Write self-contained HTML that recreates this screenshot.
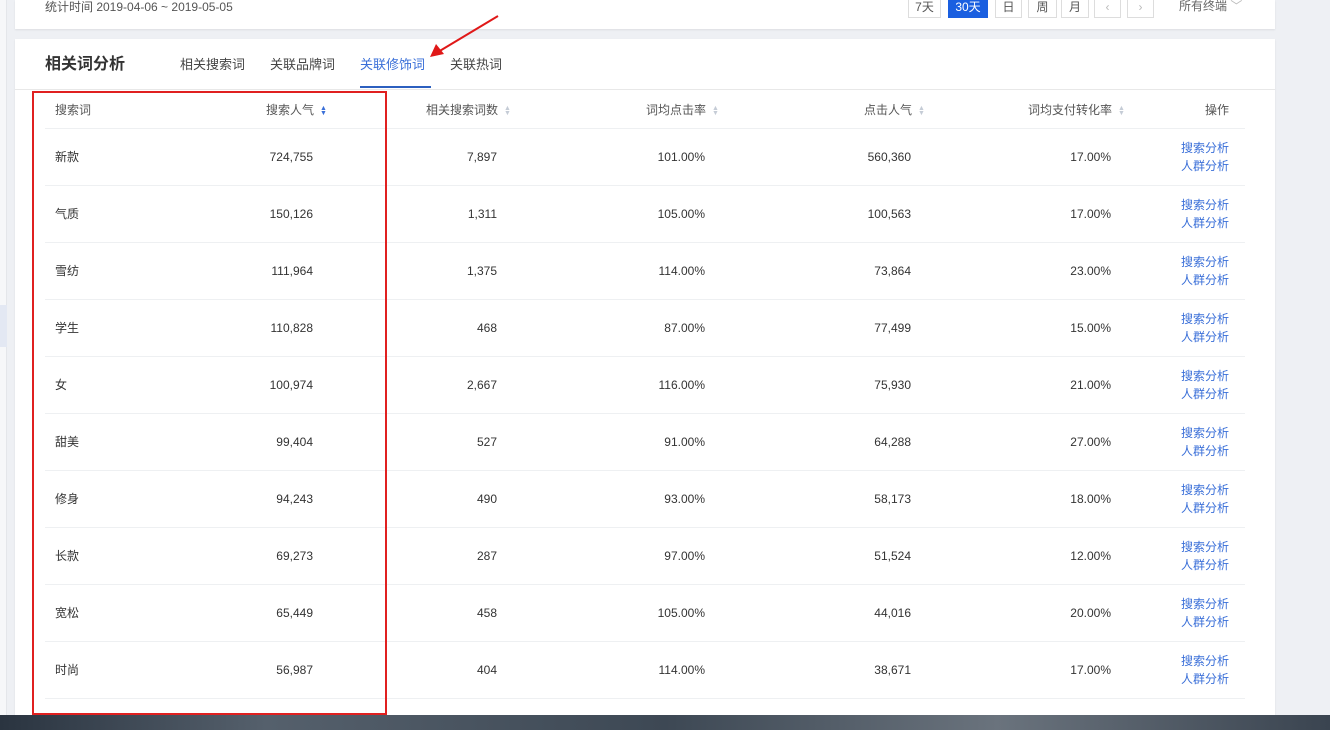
<!DOCTYPE html>
<html><head><meta charset="utf-8"><style>
*{margin:0;padding:0;box-sizing:border-box}
body{width:1330px;height:730px;overflow:hidden;background:#eef0f4;font-family:"Liberation Sans","Noto Sans CJK SC",sans-serif;font-size:12px;color:#333;position:relative}
.lstrip{position:absolute;left:0;top:0;width:7px;height:715px;background:#f6f7f9;border-right:1px solid #e4e6ea}
.lstrip i{position:absolute;left:0;top:305px;width:7px;height:42px;background:#e3e8f3}
.top{position:absolute;left:15px;top:0;width:1260px;height:29px;background:#fff;box-shadow:0 1px 2px rgba(0,0,0,.08)}
.top .t{position:absolute;left:30px;top:-2px;font-size:12px;color:#555}
.btn{position:absolute;top:-4px;height:22px;border:1px solid #ddd;font-size:12px;color:#555;text-align:center;line-height:20px;background:#fff}
.main{position:absolute;left:15px;top:39px;width:1260px;height:690px;background:#fff;box-shadow:0 1px 2px rgba(0,0,0,.08)}
.title{position:absolute;left:30px;top:14px;font-size:16px;font-weight:bold;color:#333;line-height:24px}
.tab{position:absolute;top:16px;font-size:13px;color:#444;line-height:20px}
.tab.a{color:#3a6fd8}
.uline{position:absolute;left:345px;top:47px;width:71px;height:2px;background:#2c5fbf}
.hr{position:absolute;left:0;top:50px;width:1260px;height:1px;background:#e8e8e8}
.row{position:absolute;left:30px;width:1200px;border-bottom:1px solid #eef0f2}
.c{position:absolute;font-size:12px;color:#333;white-space:nowrap;line-height:14px}
.r{text-align:right}
.hd .c{color:#555}
.s{display:inline-block;width:6px;margin-left:6px;vertical-align:middle;line-height:5px;font-size:7px;color:#c5ccd6}
.lk{color:#3a6fd8;line-height:18px}
.red{position:absolute;left:32px;top:91px;width:355px;height:624px;border:2px solid #e02020}
.task{position:absolute;left:0;top:715px;width:1330px;height:15px;background:linear-gradient(90deg,#2a3440,#55606c 20%,#3d4854 50%,#6a737d 75%,#3a4450)}
</style></head><body>
<div class="lstrip"><i></i></div>
<div class="top"><div class="t">统计时间 2019-04-06 ~ 2019-05-05</div>
<div class="btn" style="left:893px;width:33px">7天</div>
<div class="btn" style="left:933px;width:40px;background:#1a5fe0;color:#fff;border-color:#1a5fe0">30天</div>
<div class="btn" style="left:980px;width:27px">日</div>
<div class="btn" style="left:1013px;width:29px">周</div>
<div class="btn" style="left:1046px;width:28px">月</div>
<div class="btn" style="left:1079px;width:27px;color:#bbb">‹</div>
<div class="btn" style="left:1112px;width:27px;color:#bbb">›</div>
<div style="position:absolute;left:1164px;top:-3px;color:#666">所有终端 <span style="color:#bbb">﹀</span></div>
</div>
<div class="main">
<div class="title">相关词分析</div>
<div class="tab" style="left:165px">相关搜索词</div>
<div class="tab" style="left:255px">关联品牌词</div>
<div class="tab a" style="left:345px">关联修饰词</div>
<div class="tab" style="left:435px">关联热词</div>
<div class="uline"></div><div class="hr"></div>
<div class="row hd" style="top:51px;height:39px">
<div class="c" style="left:10px;top:13px">搜索词</div>
<div class="c r" style="right:919px;top:13px">搜索人气<span class="s" style="color:#3a6fd8">▲<br>▼</span></div>
<div class="c r" style="right:735px;top:13px">相关搜索词数<span class="s">▲<br>▼</span></div>
<div class="c r" style="right:527px;top:13px">词均点击率<span class="s">▲<br>▼</span></div>
<div class="c r" style="right:321px;top:13px">点击人气<span class="s">▲<br>▼</span></div>
<div class="c r" style="right:121px;top:13px">词均支付转化率<span class="s">▲<br>▼</span></div>
<div class="c r" style="right:16px;top:13px">操作</div>
</div>
</div>
<div id="rows"></div>
<div class="red"></div>
<div class="task"></div>
<script>
var d=[["新款","724,755","7,897","101.00%","560,360","17.00%"],["气质","150,126","1,311","105.00%","100,563","17.00%"],["雪纺","111,964","1,375","114.00%","73,864","23.00%"],["学生","110,828","468","87.00%","77,499","15.00%"],["女","100,974","2,667","116.00%","75,930","21.00%"],["甜美","99,404","527","91.00%","64,288","27.00%"],["修身","94,243","490","93.00%","58,173","18.00%"],["长款","69,273","287","97.00%","51,524","12.00%"],["宽松","65,449","458","105.00%","44,016","20.00%"],["时尚","56,987","404","114.00%","38,671","17.00%"]];
var h="";d.forEach(function(r,i){var t=129+i*57;
h+='<div class="row" style="left:45px;top:'+t+'px;height:57px">'+
'<div class="c" style="left:10px;top:21px">'+r[0]+'</div>'+
'<div class="c r" style="right:932px;top:21px">'+r[1]+'</div>'+
'<div class="c r" style="right:748px;top:21px">'+r[2]+'</div>'+
'<div class="c r" style="right:540px;top:21px">'+r[3]+'</div>'+
'<div class="c r" style="right:334px;top:21px">'+r[4]+'</div>'+
'<div class="c r" style="right:134px;top:21px">'+r[5]+'</div>'+
'<div class="c r lk" style="right:16px;top:10px">搜索分析<br>人群分析</div></div>';});
document.getElementById("rows").innerHTML=h;
</script>
<svg style="position:absolute;left:428px;top:14px" width="72" height="44"><line x1="70" y1="2" x2="10" y2="38" stroke="#e01818" stroke-width="2"/><polygon points="2,43 8,30 16,40" fill="#e01818"/></svg>
</body></html>
